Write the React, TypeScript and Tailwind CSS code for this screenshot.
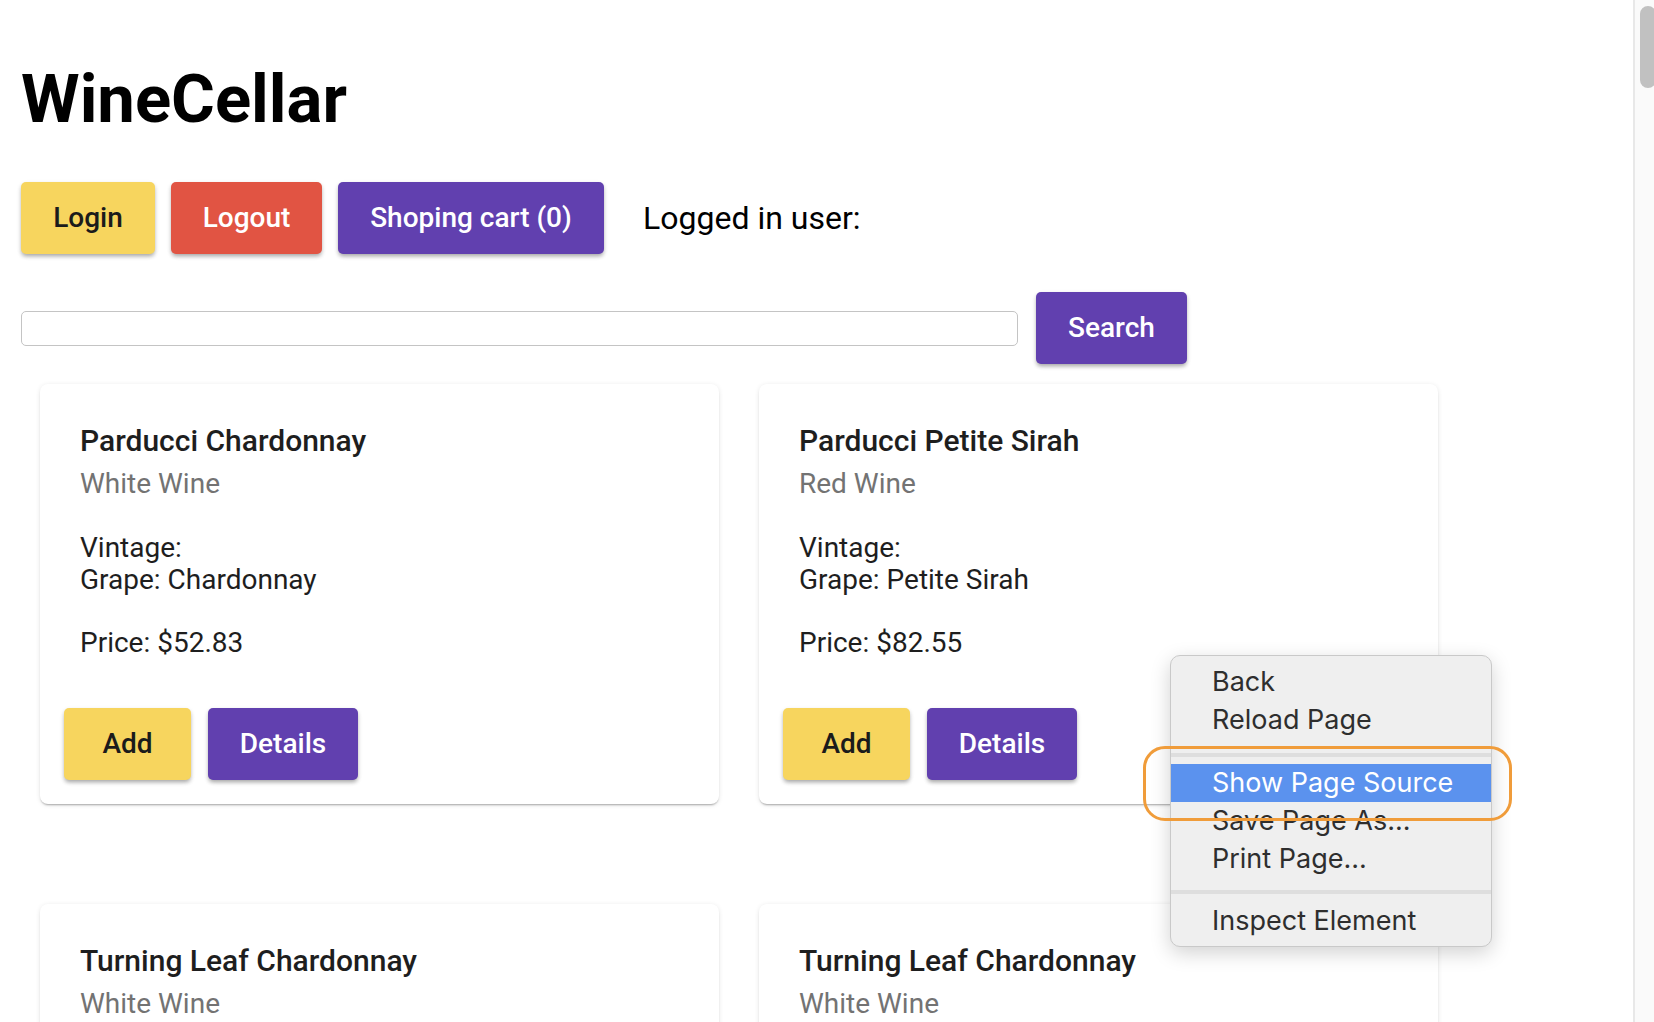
import React from "react";

type Wine = {
  name: string;
  type: string;
  vintage: string;
  grape: string;
  price: string;
};

const WINES: Wine[] = [
  { name: "Parducci Chardonnay", type: "White Wine", vintage: "", grape: "Chardonnay", price: "$52.83" },
  { name: "Parducci Petite Sirah", type: "Red Wine", vintage: "", grape: "Petite Sirah", price: "$82.55" },
  { name: "Turning Leaf Chardonnay", type: "White Wine", vintage: "", grape: "Chardonnay", price: "$24.10" },
  { name: "Turning Leaf Chardonnay", type: "White Wine", vintage: "", grape: "Chardonnay", price: "$24.10" },
];

const btn =
  "h-[72px] rounded-[5px] text-[28px] font-medium flex items-center justify-center shadow-[0_3px_4px_-1px_rgba(0,0,0,0.28),0_2px_5px_0_rgba(0,0,0,0.12)]";

function WineCard({ wine }: { wine: Wine }) {
  return (
    <div className="w-[679px] h-[420px] rounded-[8px] bg-white shadow-[0_2px_2px_-1px_rgba(0,0,0,0.3),0_1px_5px_0_rgba(0,0,0,0.1)]">
      <div className="pt-[37px] px-[40px]">
        <div className="text-[30px] leading-[40px] font-medium text-[#1e1e1e]">{wine.name}</div>
        <div className="mt-[3px] text-[28px] leading-[40px] text-[#737373]">{wine.type}</div>
        <div className="mt-[28px] text-[28px] leading-[32px] text-[#1e1e1e]">
          <div>Vintage: {wine.vintage}</div>
          <div>Grape: {wine.grape}</div>
        </div>
        <div className="mt-[31px] text-[28px] leading-[32px] text-[#1e1e1e]">Price: {wine.price}</div>
      </div>
      <div className="mt-[49px] px-[24px] flex gap-[17px]">
        <button className={`${btn} w-[127px] bg-[#f7d55e] text-[#1b1b1b]`}>Add</button>
        <button className={`${btn} w-[150px] bg-[#6140af] text-white`}>Details</button>
      </div>
    </div>
  );
}

function ContextMenu() {
  const item = "h-[38px] pl-[41px] flex items-center";
  return (
    <div
      className="absolute left-[1170px] top-[655px] w-[322px] h-[292px] rounded-[10px] border border-[#c9c9c9] bg-[#efefef] py-[7px] text-[27px] text-[#2e2e2e] shadow-[0_6px_20px_rgba(0,0,0,0.18)]"
      style={{ fontFamily: "Inter, 'Liberation Sans', sans-serif" }}
    >
      <div className={item}>Back</div>
      <div className={item}>Reload Page</div>
      <div className="mt-[14px] mb-[7px] h-[4px] bg-[#dedede]" />
      <div className={`${item} h-[37px] bg-[#5b92ee] text-white`}>Show Page Source</div>
      <div className={item}>Save Page As...</div>
      <div className={item}>Print Page...</div>
      <div className="mt-[12px] mb-[8px] h-[4px] bg-[#dedede]" />
      <div className={item}>Inspect Element</div>
    </div>
  );
}

export default function App() {
  return (
    <div
      className="relative w-[1654px] h-[1022px] overflow-hidden bg-white flex"
      style={{ fontFamily: "Roboto, 'Liberation Sans', sans-serif" }}
    >
      <main className="flex-1 px-[21px]">
        <h1 className="mt-[66px] text-[67px] leading-[67px] font-bold text-black">WineCellar</h1>

        <div className="mt-[49px] flex items-center gap-[16px]">
          <button className={`${btn} w-[134px] bg-[#f7d55e] text-[#1b1b1b]`}>Login</button>
          <button className={`${btn} w-[151px] bg-[#e15443] text-white`}>Logout</button>
          <button className={`${btn} w-[266px] bg-[#6140af] text-white`}>Shoping cart (0)</button>
          <span className="ml-[23px] text-[32px] text-black">Logged in user:</span>
        </div>

        <div className="mt-[38px] flex items-center gap-[18px]">
          <input className="w-[997px] h-[35px] rounded-[5px] border border-[#c4c4c4] bg-white px-3 outline-none" />
          <button className={`${btn} w-[151px] bg-[#6140af] text-white`}>Search</button>
        </div>

        <div className="mt-[20px] pl-[19px] grid grid-cols-[679px_679px] gap-x-[40px] gap-y-[100px]">
          {WINES.map((w, i) => (
            <WineCard key={i} wine={w} />
          ))}
        </div>
      </main>

      {/* fake page scrollbar */}
      <div className="w-[21px] h-full border-l-2 border-[#e8e8e8] bg-[#fafafa] pt-[6px] pl-[5px]">
        <div className="w-[16px] h-[82px] rounded-full bg-[#c1c1c1]" />
      </div>

      <ContextMenu />
      <div className="absolute left-[1143px] top-[746px] w-[369px] h-[75px] rounded-[22px] border-[3px] border-[#f09c3a]" />
    </div>
  );
}
